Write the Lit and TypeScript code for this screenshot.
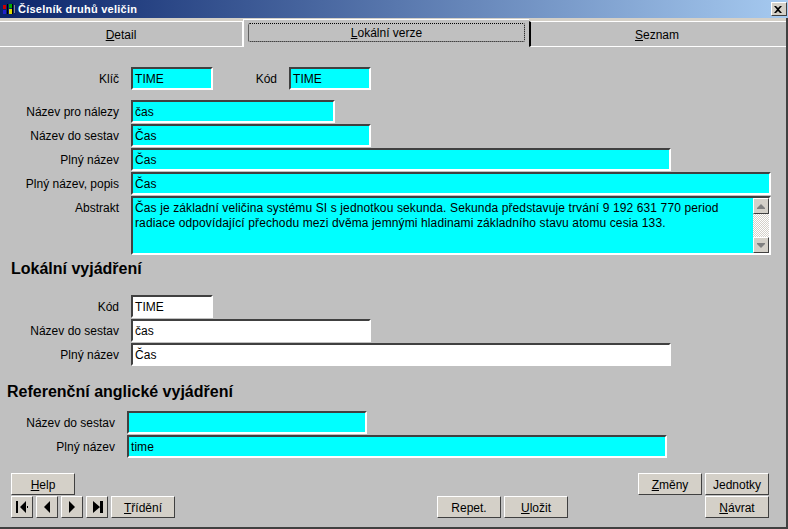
import { LitElement, html, css } from "lit";
import { customElement } from "lit/decorators.js";

@customElement("app-root")
export class AppRoot extends LitElement {
  static styles = css`
    :host {
      display: block;
      width: 788px;
      height: 529px;
      font-family: "Liberation Sans", Arial, sans-serif;
      font-size: 12px;
      color: #000;
      background: #c0c0c0;
      overflow: hidden;
    }
    .window {
      box-sizing: border-box;
      height: 529px;
      display: flex;
      flex-direction: column;
      border-right: 2px solid #404040;
      border-bottom: 2px solid #404040;
    }

    /* Title bar */
    .title {
      height: 18px;
      flex: none;
      display: flex;
      align-items: center;
      padding: 0 1px 0 2px;
      margin-right: -2px;
      background: linear-gradient(90deg, #0a246a, #a6caf0);
      color: #fff;
      font-weight: bold;
      font-size: 11px;
    }
    .title svg { flex: none; margin-right: 2px; }
    .title span { flex: 1; letter-spacing: 0.25px; }
    .close {
      box-sizing: border-box;
      width: 16px;
      height: 14px;
      background: #d4d0c8;
      border: 1px solid;
      border-color: #fff #404040 #404040 #fff;
      display: flex;
      align-items: center;
      justify-content: center;
    }

    /* Tabs */
    .tabs {
      flex: none;
      display: flex;
      height: 29px;
      background: #d4d0c8;
    }
    .tab {
      box-sizing: border-box;
      margin-top: 3px;
      height: 26px;
      background: #c0c0c0;
      border-top: 1px solid #fff;
      border-bottom: 1px solid #fff;
      display: flex;
      align-items: center;
      justify-content: center;
      padding-top: 1px;
    }
    .tab.first { width: 243px; border-right: 1px solid #fff; }
    .tab.last { flex: 1; border-left: 2px solid #000; padding-right: 3px; }
    .tab.active {
      width: 286px;
      margin-top: 1px;
      height: 28px;
      border-bottom: none;
      border-left: 1px solid #fff;
      padding: 3px 4px 5px;
    }
    .focus {
      box-sizing: border-box;
      flex: 1;
      height: 100%;
      border: 1px dotted #000;
      border-radius: 2px;
      display: flex;
      align-items: center;
      justify-content: center;
      padding-top: 1px;
    }
    u { text-underline-offset: 1px; }

    /* Form */
    .form {
      flex: 1;
      display: flex;
      flex-direction: column;
      padding-top: 20px;
    }
    .row {
      display: flex;
      height: 24px;
    }
    .row.top { height: 33px; }
    .label {
      width: 119px;
      flex: none;
      text-align: right;
      line-height: 24px;
    }
    .label.memo-label { line-height: 24px; }
    .label.second { width: 64px; margin-right: 12px; }
    .field {
      box-sizing: border-box;
      height: 23px;
      margin-left: 12px;
      border: 2px solid;
      border-color: #404040 #fff #fff #404040;
      background: #0ff;
      padding: 0 2px;
      line-height: 21px;
      letter-spacing: 0.05px;
      white-space: nowrap;
    }
    .field.white { background: #fff; }
    .label.second + .field { margin-left: 0; }
    .w82 { width: 82px; }
    .w204 { width: 204px; }
    .w240 { width: 240px; }
    .w540 { width: 540px; }
    .w640 { width: 640px; }
    .ref .label { width: 115px; }
    .abstract { height: 59px; }
    .memo {
      box-sizing: border-box;
      width: 640px;
      height: 59px;
      margin-left: 12px;
      border: 2px solid;
      border-color: #404040 #fff #fff #404040;
      background: #0ff;
      display: flex;
    }
    .memo-text {
      flex: 1;
      padding: 3px 2px;
      line-height: 15px;
      letter-spacing: 0.12px;
    }
    .scroll {
      width: 16px;
      flex: none;
      display: flex;
      flex-direction: column;
      justify-content: space-between;
      background: repeating-conic-gradient(#fff 0 25%, #d4d0c8 0 50%) 0 0 / 2px 2px;
    }
    .scroll div {
      box-sizing: border-box;
      height: 16px;
      background: #d4d0c8;
      border: 1px solid;
      border-color: #fff #404040 #404040 #fff;
      display: flex;
      align-items: center;
      justify-content: center;
    }
    h2 {
      margin: 0;
      font-size: 16px;
      font-weight: bold;
      line-height: 18px;
    }
    .h-local { padding: 5px 0 0 11px; height: 35px; }
    .h-ref { padding: 16px 0 0 7px; height: 28px; }

    /* Buttons */
    .footer {
      display: flex;
      flex-direction: column;
      gap: 1px;
      padding: 14px 0 0 11px;
    }
    .line { display: flex; height: 22px; }
    button {
      box-sizing: border-box;
      width: 64px;
      height: 22px;
      padding: 1px 0 0;
      font: inherit;
      color: #000;
      background: #d4d0c8;
      border: 1px solid;
      border-color: #fff #404040 #404040 #fff;
    }
    button.nav {
      width: 22px;
      margin-right: 3px;
      padding: 0;
      display: flex;
      align-items: center;
      justify-content: center;
    }
    .gap-zmeny { margin-left: 563px; }
    .gap-1 { margin-left: 3px; }
    .gap-repet { margin-left: 262px; }
    .gap-navrat { margin-left: 137px; }
  `;

  render() {
    const field = (label: string, value: string, w: string, white = false) => html`
      <div class="row">
        <div class="label">${label}</div>
        <div class="field ${w} ${white ? "white" : ""}">${value}</div>
      </div>
    `;
    return html`
      <div class="window">
        <div class="title">
          <svg width="14" height="14" viewBox="0 0 14 14">
            <rect width="14" height="14" fill="#0a246a" />
            <path d="M1 3h3v4H1z" fill="#c00" />
            <path d="M1 8h3v4H1z" fill="#22c" />
            <path d="M5 2h1v10H5zM10 2h1v10h-1z" fill="#000" />
            <path d="M7 2h3v4H7z" fill="#0a0" />
            <path d="M7 7h3v5H7z" fill="#dd0" />
            <path d="M12 3h1v8h-1z" fill="#888" />
          </svg>
          <span>Číselník druhů veličin</span>
          <div class="close">
            <svg width="8" height="7" viewBox="0 0 8 7">
              <path d="M0 0h2l2 2 2-2h2L5 3.500 8 7H6L4 5 2 7H0l3-3.500z" fill="#000" />
            </svg>
          </div>
        </div>

        <div class="tabs">
          <div class="tab first"><span><u>D</u>etail</span></div>
          <div class="tab active"><div class="focus"><span><u>L</u>okální verze</span></div></div>
          <div class="tab last"><span><u>S</u>eznam</span></div>
        </div>

        <div class="form">
          <div class="row top">
            <div class="label">Klíč</div>
            <div class="field w82">TIME</div>
            <div class="label second">Kód</div>
            <div class="field w82">TIME</div>
          </div>
          ${field("Název pro nálezy", "čas", "w204")}
          ${field("Název do sestav", "Čas", "w240")}
          ${field("Plný název", "Čas", "w540")}
          ${field("Plný název, popis", "Čas", "w640")}
          <div class="row abstract">
            <div class="label memo-label">Abstrakt</div>
            <div class="memo">
              <div class="memo-text">
                Čas je základní veličina systému SI s jednotkou sekunda. Sekunda představuje trvání 9 192 631 770 period
                radiace odpovídající přechodu mezi dvěma jemnými hladinami základního stavu atomu cesia 133.
              </div>
              <div class="scroll">
                <div>
                  <svg width="8" height="5" viewBox="0 0 8 5"><path d="M4 0l4 4v1H0V4z" fill="#808080" /></svg>
                </div>
                <div>
                  <svg width="8" height="5" viewBox="0 0 8 5"><path d="M0 0h8v1L4 5 0 1z" fill="#808080" /></svg>
                </div>
              </div>
            </div>
          </div>

          <div class="h-local"><h2>Lokální vyjádření</h2></div>
          ${field("Kód", "TIME", "w82", true)}
          ${field("Název do sestav", "čas", "w240", true)}
          ${field("Plný název", "Čas", "w540", true)}

          <div class="h-ref"><h2>Referenční anglické vyjádření</h2></div>
          <div class="ref">
            ${field("Název do sestav", "", "w240")}
            ${field("Plný název", "time", "w540")}
          </div>

          <div class="footer">
            <div class="line">
              <button><u>H</u>elp</button>
              <button class="gap-zmeny"><u>Z</u>měny</button>
              <button class="gap-1">Jednotky</button>
            </div>
            <div class="line">
              <button class="nav">
                <svg width="14" height="12" viewBox="0 0 14 12"><path d="M1 0h2v12H1zM11 0v12L5 6zM12 5h1v2h-1z" fill="#000" /></svg>
              </button>
              <button class="nav">
                <svg width="8" height="12" viewBox="0 0 8 12"><path d="M7 0v12L1 6z" fill="#000" /></svg>
              </button>
              <button class="nav">
                <svg width="8" height="12" viewBox="0 0 8 12"><path d="M1 0v12l6-6z" fill="#000" /></svg>
              </button>
              <button class="nav">
                <svg width="14" height="12" viewBox="0 0 14 12"><path d="M3 0v12l7-6zM10 0h3v12h-3z" fill="#000" /></svg>
              </button>
              <button><u>T</u>řídění</button>
              <button class="gap-repet">Repet.</button>
              <button class="gap-1"><u>U</u>ložit</button>
              <button class="gap-navrat"><u>N</u>ávrat</button>
            </div>
          </div>
        </div>
      </div>
    `;
  }
}
